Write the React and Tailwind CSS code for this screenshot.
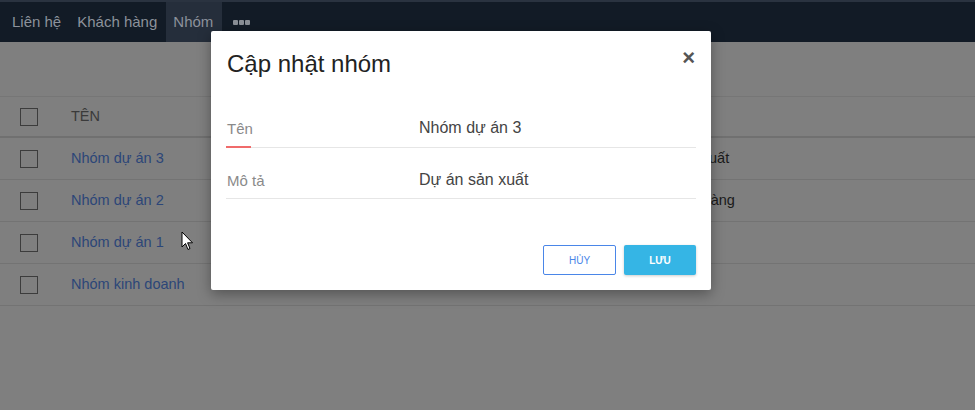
import React from "react";

const rows = [
  { name: "Nhóm dự án 3", desc: "Dự án sản xuất" },
  { name: "Nhóm dự án 2", desc: "Dự án bán hàng" },
  { name: "Nhóm dự án 1", desc: "" },
  { name: "Nhóm kinh doanh", desc: "" },
];

export default function App() {
  return (
    <div className="relative w-[975px] h-[410px] overflow-hidden bg-[#7f7f7f] text-[14.5px]" style={{ fontFamily: '"Liberation Sans", Arial, sans-serif' }}>
      <div className="h-[2px] bg-[#2a3340]" />
      <nav className="flex h-[40px] items-stretch bg-[#121b26] text-[15px] text-[#8c929b]">
        <div className="flex items-center pl-[12px] pr-[8px]">Liên hệ</div>
        <div className="flex items-center pl-[8px] pr-[9px]">Khách hàng</div>
        <div className="flex items-center bg-[#252e3b] pl-[7px] pr-[9px]">Nhóm</div>
        <div className="flex items-center gap-[1px] pl-[11px] pt-[1px]">
          <span className="h-[5px] w-[5px] rounded-[1px] bg-[#8a8f96]" />
          <span className="h-[5px] w-[5px] rounded-[1px] bg-[#8a8f96]" />
          <span className="h-[5px] w-[5px] rounded-[1px] bg-[#8a8f96]" />
        </div>
      </nav>
      <div className="mt-[54px] border-t border-[#767676]">
        <div className="flex h-[41px] items-center border-b-2 border-[#707070]">
          <div className="ml-[20px] h-[18px] w-[18px] border border-[#3c3c3c]" />
          <div className="ml-[33px] text-[#3a3a3a]">TÊN</div>
        </div>
        {rows.map((r) => (
          <div key={r.name} className="flex h-[42px] items-center border-b border-[#737373]">
            <div className="ml-[20px] h-[18px] w-[18px] border border-[#3c3c3c]" />
            <div className="ml-[33px] w-[559px] text-[#2c4678]">{r.name}</div>
            <div className="text-[#1a1a1a]">{r.desc}</div>
          </div>
        ))}
      </div>

      <svg className="absolute left-[181px] top-[231px]" width="13" height="20" viewBox="0 0 13 20">
        <path d="M1 1 L1 16 L4.5 12.5 L7 18.5 L9 17.5 L6.6 11.8 L11.5 11.8 Z" fill="#fff" stroke="#000" strokeWidth="1" strokeLinejoin="round" />
      </svg>

      <div className="absolute left-[211px] top-[31px] w-[500px] h-[259px] bg-white rounded-[2px] shadow-[0_4px_14px_rgba(0,0,0,0.35)] px-[15px]">
        <div className="flex items-start justify-between pt-[19px]">
          <h1 className="text-[24px] leading-[28px] text-[#222] pl-[1px]">Cập nhật nhóm</h1>
          <span className="mt-[-3px] mr-[1px] text-[22px] font-bold text-[#555] leading-none">×</span>
        </div>
        <div className="mt-[31px] relative flex h-[39px] items-center border-b border-[#e6e6e6]">
          <div className="w-[193px] pt-[3px] pl-[1px] text-[15px] text-[#8a8a8a]">Tên</div>
          <div className="pb-[1px] text-[16px] text-[#444]">Nhóm dự án 3</div>
          <div className="absolute left-0 bottom-[-1px] h-[2px] w-[25px] bg-[#f06b6b]" />
        </div>
        <div className="mt-[12px] flex h-[39px] items-center border-b border-[#e6e6e6]">
          <div className="w-[193px] pt-[5px] pl-[1px] text-[15px] text-[#8a8a8a]">Mô tả</div>
          <div className="pt-[1px] text-[16px] text-[#444]">Dự án sản xuất</div>
        </div>
        <div className="mt-[46px] flex justify-end gap-[8px]">
          <button className="h-[30px] w-[73px] rounded-[2px] border border-[#4a86e8] bg-white text-[10px] text-[#4a86e8]">HỦY</button>
          <button className="h-[30px] w-[72px] rounded-[2px] bg-[#35b5e5] text-[10px] font-bold text-white shadow-[0_1px_3px_rgba(0,0,0,0.2)]">LƯU</button>
        </div>
      </div>
    </div>
  );
}
